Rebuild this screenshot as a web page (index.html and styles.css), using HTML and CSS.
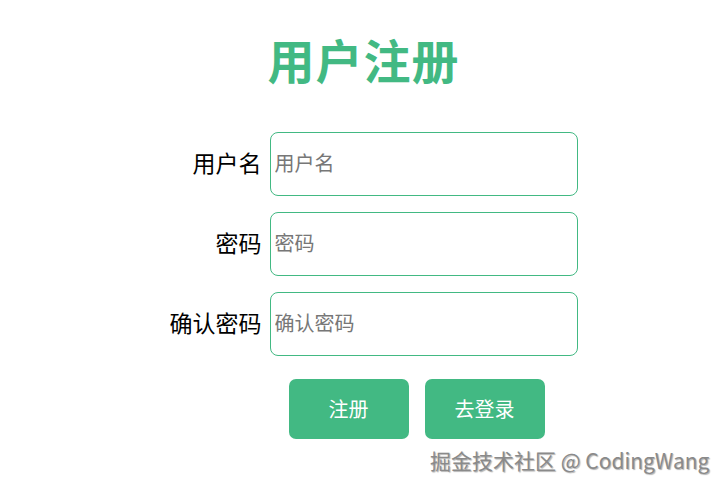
FILE: index.html
```html
<!DOCTYPE html>
<html lang="zh-CN">
<head>
<meta charset="utf-8">
<title>用户注册</title>
<link rel="stylesheet" href="styles.css">
</head>
<body>
<div class="page">
  <h1 class="title">用户注册</h1>
  <form class="form">
    <label class="label" for="u">用户名</label>
    <input class="input" id="u" type="text" placeholder="用户名">
    <label class="label" for="p">密码</label>
    <input class="input" id="p" type="password" placeholder="密码">
    <label class="label" for="c">确认密码</label>
    <input class="input" id="c" type="password" placeholder="确认密码">
    <div class="actions">
      <button class="btn" type="button">注册</button>
      <button class="btn" type="button">去登录</button>
    </div>
  </form>
  <div class="watermark">掘金技术社区 @ CodingWang</div>
</div>
</body>
</html>
```
FILE: styles.css
```css
* { box-sizing: border-box; }
html, body { margin: 0; padding: 0; background: #fff; }
body {
  font-family: "Noto Sans CJK SC", "Noto Sans", sans-serif;
  width: 727px;
  height: 489px;
  overflow: hidden;
}
.page {
  position: relative;
  width: 727px;
  height: 489px;
  padding-top: 26px;
}
.title {
  margin: 0;
  text-align: center;
  color: #42b983;
  font-size: 47px;
  font-weight: 700;
  line-height: 66px;
  letter-spacing: 1px;
}
.form {
  display: grid;
  grid-template-columns: 112px 308px;
  column-gap: 8px;
  row-gap: 16px;
  justify-content: center;
  align-items: center;
  margin-top: 40px;
}
.label {
  text-align: right;
  font-size: 23px;
  line-height: 30px;
  color: #000;
  margin-top: -4px;
}
.input {
  width: 308px;
  height: 64px;
  border: 1px solid #42b983;
  border-radius: 8px;
  padding: 0 4px 3px;
  font-family: "Noto Sans CJK SC", "Noto Sans", sans-serif;
  font-size: 20px;
  color: #333;
  outline: none;
}
.input::placeholder { color: #777; }
.actions {
  grid-column: 2;
  display: flex;
  gap: 16px;
  padding-left: 19px;
  margin-top: 7px;
}
.btn {
  width: 120px;
  height: 60px;
  border: none;
  border-radius: 7px;
  background: #42b983;
  color: #fff;
  font-family: "Noto Sans CJK SC", "Noto Sans", sans-serif;
  font-size: 20px;
  padding: 0 0 2px;
  cursor: pointer;
}
.watermark {
  position: absolute;
  left: 430px;
  top: 445px;
  font-size: 21px;
  color: #8a8a8a;
  text-shadow: 1px 1px 1px rgba(0,0,0,0.3);
  white-space: nowrap;
}
```
